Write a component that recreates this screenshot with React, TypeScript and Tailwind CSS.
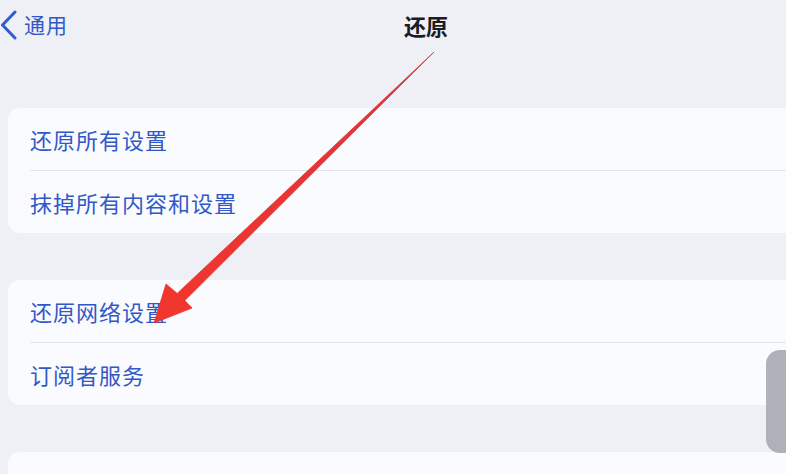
import React from 'react';

const rowText = 'text-[22px] tracking-[1px] text-[#3258c8] leading-none';

function Row({ label, divider = false }: { label: string; divider?: boolean }) {
  return (
    <div className="flex flex-col">
      {divider && <div className="ml-[22px] h-px bg-[#e4e5ec]" />}
      <div className="flex h-[62px] items-center pl-[22px]">
        <span className={rowText}>{label}</span>
      </div>
    </div>
  );
}

function Group({ items }: { items: string[] }) {
  return (
    <div className="ml-2 rounded-l-[12px] bg-[#fafbfe]">
      {items.map((label, i) => (
        <Row key={label} label={label} divider={i > 0} />
      ))}
    </div>
  );
}

export default function App() {
  return (
    <div
      className="relative h-[474px] w-[786px] overflow-hidden bg-[#efeff6]"
      style={{ fontFamily: '"Noto Sans CJK SC", "Noto Sans", sans-serif' }}
    >
      <div className="flex h-[54px] items-center pb-[5px]">
        <div className="flex items-center gap-[7px]">
          <svg width="17" height="30" viewBox="0 0 17 30" className="shrink-0">
            <path d="M15 2 L2.5 15 L15 28" fill="none" stroke="#2f5ccf" strokeWidth="3" strokeLinecap="round" strokeLinejoin="round" />
          </svg>
          <span className="text-[21px] leading-none tracking-[1px] text-[#3258c8]">通用</span>
        </div>
        <span className="ml-[336px] text-[22px] font-bold leading-none text-[#1c1c22]">还原</span>
      </div>

      <div className="mt-[54px] flex flex-col gap-[47px]">
        <Group items={['还原所有设置', '抹掉所有内容和设置']} />
        <Group items={['还原网络设置', '订阅者服务']} />
        <Group items={['还原键盘字典', '还原主屏幕布局']} />
      </div>

      {/* grey handle on the right edge */}
      <div className="absolute left-[766px] top-[350px] h-[103px] w-[30px] rounded-l-[14px] bg-[#a9a9b1]/90" />

      {/* red arrow annotation */}
      <svg className="pointer-events-none absolute left-0 top-0" width="786" height="474" viewBox="0 0 786 474">
        <defs>
          <linearGradient id="arr" x1="434" y1="52" x2="154" y2="323" gradientUnits="userSpaceOnUse">
            <stop offset="0" stopColor="#b8405a" />
            <stop offset="0.25" stopColor="#e0343a" />
            <stop offset="1" stopColor="#f2362c" />
          </linearGradient>
        </defs>
        <polygon
          points="434,52 184.8,300.6 192,308 154,323 166,284 177.2,293.4"
          fill="url(#arr)"
          stroke="#e8332f"
          strokeWidth="0.8"
          strokeLinejoin="round"
        />
      </svg>
    </div>
  );
}
